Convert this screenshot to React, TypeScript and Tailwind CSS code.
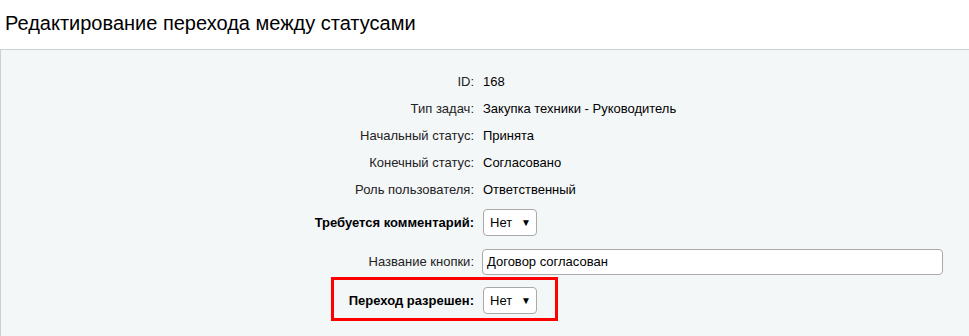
import React from 'react'

const info = [
  { label: 'ID:', value: '168' },
  { label: 'Тип задач:', value: 'Закупка техники - Руководитель' },
  { label: 'Начальный статус:', value: 'Принята' },
  { label: 'Конечный статус:', value: 'Согласовано' },
  { label: 'Роль пользователя:', value: 'Ответственный' },
]

function FakeSelect({ value }: { value: string }) {
  return (
    <div className="flex h-[27px] w-[54px] items-center justify-between rounded-[4px] border border-[#a9a9a9] bg-white pl-[6px] pr-[5px] text-[13px] text-black">
      <span>{value}</span>
      <span className="text-[10px] leading-none">▼</span>
    </div>
  )
}

export default function App() {
  return (
    <div className="min-h-[336px] bg-white font-['Liberation_Sans',Arial,sans-serif] text-[13px] text-[#222]">
      <h1 className="h-[49px] pl-[5px] pt-[11px] text-[20px] leading-[25px] text-black">
        Редактирование перехода между статусами
      </h1>

      <div className="relative min-h-[287px] border-t border-l border-[#c9d1d7] bg-[#f4f7f8] pt-[18px]">
        {info.map(row => (
          <div key={row.label} className="flex h-[27px] items-center">
            <div className="w-[473px] text-right text-[#222]">{row.label}</div>
            <div className="pl-[9px] text-black">{row.value}</div>
          </div>
        ))}

        <div className="flex h-[39px] items-center">
          <div className="w-[473px] text-right font-bold text-black">Требуется комментарий:</div>
          <div className="pl-[9px]">
            <FakeSelect value="Нет" />
          </div>
        </div>

        <div className="flex h-[39px] items-center">
          <div className="w-[473px] text-right text-[#222]">Название кнопки:</div>
          <div className="pl-[8px]">
            <div className="flex h-[26px] w-[461px] items-center rounded-[4px] border border-[#a9a9a9] bg-white px-[4px] text-black">
              Договор согласован
            </div>
          </div>
        </div>

        <div className="flex h-[39px] items-center">
          <div className="w-[473px] text-right font-bold text-black">Переход разрешен:</div>
          <div className="pl-[9px]">
            <FakeSelect value="Нет" />
          </div>
        </div>

        {/* red highlight around the last row */}
        <div className="pointer-events-none absolute left-[330px] top-[227px] h-[44px] w-[227px] border-[3px] border-[#ff0000]" />
      </div>
    </div>
  )
}
